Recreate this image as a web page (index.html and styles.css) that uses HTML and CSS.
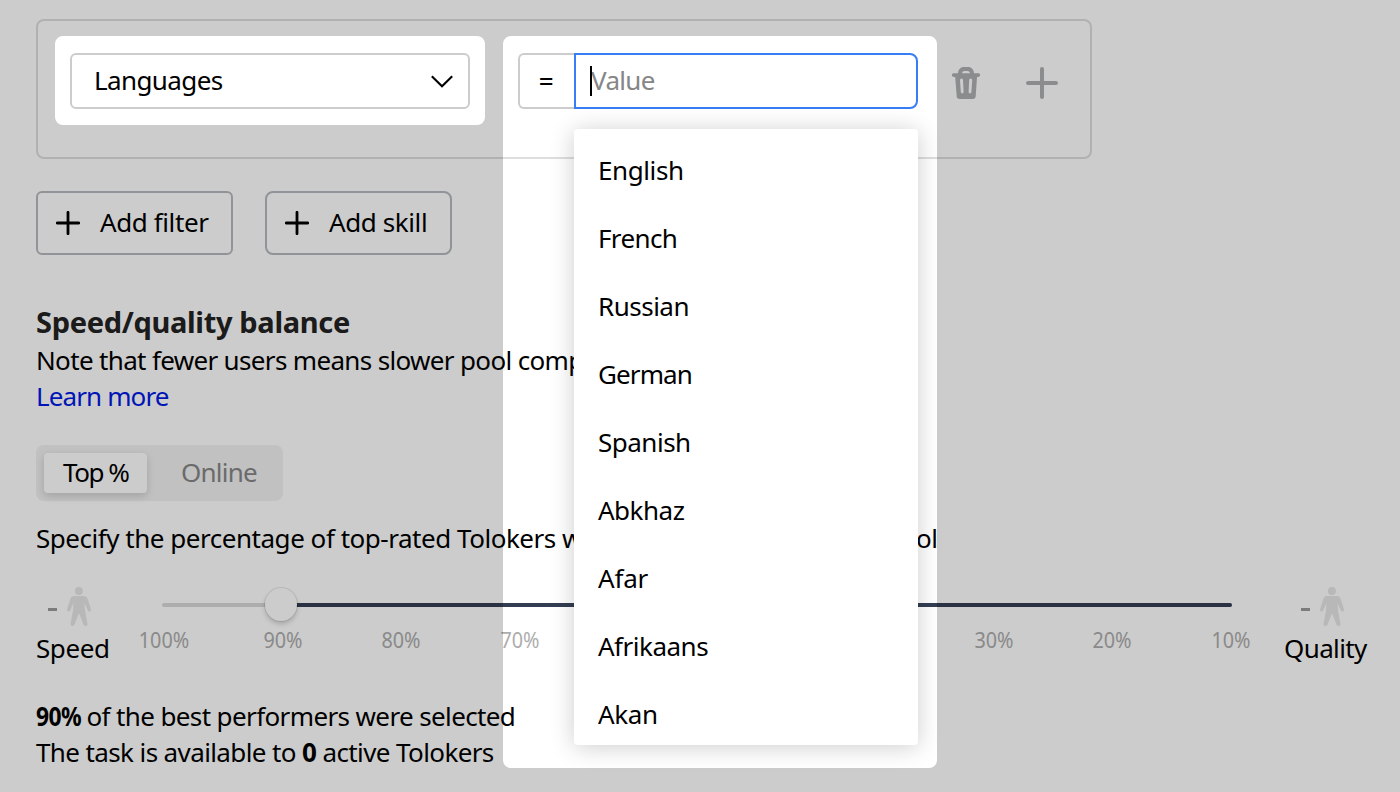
FILE: index.html
```
<!DOCTYPE html>
<html lang="en">
<head>
<meta charset="utf-8">
<title>Pool filters</title>
<link rel="stylesheet" href="styles.css">
</head>
<body>
<svg class="defs" width="0" height="0">
  <symbol id="person" viewBox="0 0 24 39"><circle cx="11.9" cy="4" r="4"/><path d="M7.5 9.1h9c2.2 0 3.600 1.200 4.400 3.300l2.800 9.100c.5 1.900-.2 2.900-1.200 2.900-.9 0-1.400-.5-1.800-1.500l-3.200-6.800.4 7 2.500 13.300c.3 1.500-.4 2.600-1.800 2.600-1.100 0-1.900-.6-2.300-1.900L12 26.200 7.700 37.100c-.4 1.300-1.200 1.900-2.300 1.900-1.400 0-2.100-1.100-1.800-2.600l2.500-13.300.4-7-3.200 6.800c-.4 1-.9 1.500-1.800 1.500-1 0-1.700-1-1.200-2.900l2.800-9.100c.8-2.100 2.200-3.300 4.400-3.300z"/></symbol>
</svg>
<main class="page">
  <section class="filter-box">
    <div class="select"><span class="select-text">Languages</span>
      <svg class="chevron" width="22" height="13" viewBox="0 0 22 13"><path d="M.8 1.200 11 11.200 21.200 1.200"/></svg>
    </div>
    <div class="condition">
      <div class="operator">=</div>
      <div class="field"><span class="placeholder">Value</span><i class="caret"></i>
        <ul class="menu">
          <li class="ls-4">English</li>
          <li class="ls-6">French</li>
          <li class="ls-5">Russian</li>
          <li class="ls-9">German</li>
          <li class="ls-5">Spanish</li>
          <li class="ls-5">Abkhaz</li>
          <li class="ls-2">Afar</li>
          <li class="ls-5">Afrikaans</li>
          <li class="ls-4">Akan</li>
        </ul>
      </div>
    </div>
    <svg class="trash" width="28" height="32" viewBox="0 0 28 32"><path fill-rule="evenodd" d="M6 6.200C6.300 2.500 8.500 0 12 0h4c3.500 0 5.700 2.500 6 6.200h4.200a1.900 1.900 0 0 1 0 3.800H25l-1.300 19.200c-.1 1.700-1.200 2.800-2.900 2.800H7.600c-1.700 0-2.800-1.100-2.900-2.800L3.200 10H1.800a1.900 1.900 0 0 1 0-3.800zM10 6.200h8c-.3-1.300-1.200-2.200-2.500-2.200h-3c-1.300 0-2.200.9-2.500 2.200zM8 13l.8 12a1.400 1.400 0 0 0 2.800 0l-.6-12a1.500 1.500 0 0 0-3 0zM17.200 13l-.6 12a1.400 1.400 0 0 0 2.800 0l.8-12a1.500 1.500 0 0 0-3 0z"/></svg>
    <svg class="add" width="32" height="32" viewBox="0 0 32 32"><path d="M16 2v28M2 16h28"/></svg>
  </section>

  <div class="actions">
    <button class="btn"><svg width="24" height="24" viewBox="0 0 24 24"><path d="M12 1.300v21.400M1.300 12h21.400"/></svg><span>Add filter</span></button>
    <button class="btn btn-skill"><svg width="24" height="24" viewBox="0 0 24 24"><path d="M12 1.300v21.400M1.300 12h21.400"/></svg><span>Add skill</span></button>
  </div>

  <h2 class="title">Speed/quality balance</h2>
  <p class="line note">Note that fewer users means slower pool comp</p>
  <p class="line"><a class="link" href="#">Learn more</a></p>

  <div class="toggle">
    <span class="tab tab-active">Top %</span>
    <span class="tab">Online</span>
  </div>

  <p class="line hint"><span>Specify the percentage of top-rated Tolokers w</span><span>ol</span></p>

  <div class="balance">
    <div class="side">
      <div class="figure"><i class="dash"></i><svg class="person" width="24" height="39"><use href="#person"/></svg></div>
      <div class="line ls-4">Speed</div>
    </div>
    <div class="slider">
      <div class="track"><div class="rest"></div><i class="thumb"></i></div>
      <div class="ticks"><span>100%</span><span>90%</span><span>80%</span><span>70%</span><span></span><span></span><span></span><span>30%</span><span>20%</span><span>10%</span></div>
    </div>
    <div class="side">
      <div class="figure"><i class="dash"></i><svg class="person" width="24" height="39"><use href="#person"/></svg></div>
      <div class="line ls-6">Quality</div>
    </div>
  </div>

  <p class="line ls-6"><b class="percent">90%</b> of the best performers were selected</p>
  <p class="line summary">The task is available to <b>0</b> active Tolokers</p>
</main>
<svg class="shade" width="1400" height="792" viewBox="0 0 1400 792"><path fill-rule="evenodd" d="M0 0H1400V792H0zM63 36H477a8 8 0 0 1 8 8V117a8 8 0 0 1-8 8H63a8 8 0 0 1-8-8V44a8 8 0 0 1 8-8zM511 36H929a8 8 0 0 1 8 8V760a8 8 0 0 1-8 8H511a8 8 0 0 1-8-8V44a8 8 0 0 1 8-8z"/></svg>
</body>
</html>
```
FILE: styles.css
```
* { box-sizing: border-box; }
body {
  margin: 0;
  height: 792px;
  overflow: hidden;
  background: #fff;
  color: #000;
  font: 26px/36px "Noto Sans", "Open Sans", sans-serif;
  letter-spacing: -.5px;
}
p, h2, ul { margin: 0; padding: 0; }
.defs { position: absolute; }
.shade { position: absolute; z-index: 3; top: 0; left: 0; fill: rgba(0, 0, 0, .2); pointer-events: none; }
.page { width: 1400px; padding: 19px 32px 0 36px; }

.ls-2 { letter-spacing: -.2px; }
.ls-4 { letter-spacing: -.4px; }
.ls-5 { letter-spacing: -.5px; }
.ls-6 { letter-spacing: -.62px; }
.ls-9 { letter-spacing: -.9px; }

.filter-box {
  display: flex;
  align-items: flex-start;
  width: 1056px;
  height: 140px;
  padding: 32px;
  border: 2px solid #dedede;
  border-radius: 8px;
}
.select {
  display: flex;
  align-items: center;
  justify-content: space-between;
  width: 400px;
  height: 56px;
  padding: 0 15px 0 22px;
  border: 2px solid #ccc;
  border-radius: 6px;
}
.select-text { padding-bottom: 2px; letter-spacing: -.6px; }
.chevron { fill: none; stroke: #000; stroke-width: 2.1; }
.condition { display: flex; margin-left: 48px; }
.operator {
  width: 56px;
  height: 56px;
  padding-right: 2px;
  border: 2px solid #ccc;
  border-right: 0;
  border-radius: 6px 0 0 6px;
  font-weight: 500;
  line-height: 50px;
  text-align: center;
}
.field {
  position: relative;
  z-index: 2;
  width: 344px;
  height: 56px;
  padding-left: 15px;
  border: 2px solid #377df5;
  border-radius: 0 8px 8px 0;
  line-height: 50px;
}
.placeholder { color: #868686; letter-spacing: -.7px; }
.caret { position: absolute; left: 14px; top: 11px; width: 2px; height: 30px; background: #000; }
.menu {
  position: absolute;
  left: -2px;
  top: 74px;
  width: 344px;
  height: 616px;
  padding: 7px 24px 0;
  overflow: hidden;
  border-radius: 4px;
  background: #fff;
  box-shadow: 0 2px 24px rgba(0, 0, 0, .2);
  list-style: none;
  line-height: 68px;
}
.trash { margin: 14px 0 0 34px; fill: #adb0b2; }
.add { margin: 14px 0 0 46px; stroke: #adb0b2; stroke-width: 4; stroke-linecap: round; }

.actions { display: flex; gap: 32px; margin-top: 32px; }
.btn {
  display: flex;
  align-items: center;
  gap: 20px;
  width: 197px;
  height: 64px;
  padding: 0 0 0 18px;
  border: 2px solid #b4babe;
  border-radius: 6px;
  background: none;
  color: inherit;
  font: inherit;
  letter-spacing: -.4px;
}
.btn-skill { width: 187px; border-radius: 8px; }
.btn span { padding-bottom: 2px; }
.btn svg { stroke: #000; stroke-width: 2.8; stroke-linecap: round; }

.title { margin: 49px 0 2px; color: #222; font-size: 29px; font-weight: 700; letter-spacing: -.32px; }
.line { height: 36px; white-space: nowrap; }
.note { letter-spacing: -.66px; }
.summary { letter-spacing: -.61px; }
.link { color: #001ae6; text-decoration: none; letter-spacing: -.88px; }

.toggle {
  display: flex;
  width: 247px;
  height: 56px;
  margin-top: 31px;
  padding: 8px;
  border-radius: 8px;
  background: #f2f2f2;
  line-height: 38px;
}
.tab { padding-left: 34px; color: #868686; letter-spacing: -.75px; }
.tab-active {
  width: 103px;
  padding-left: 19px;
  border-radius: 4px;
  background: #fff;
  box-shadow: 0 3px 8px rgba(0, 0, 0, .16);
  color: #000;
  letter-spacing: -1.45px;
}
.hint { display: flex; justify-content: space-between; width: 901.5px; margin-top: 19px; letter-spacing: -.47px; }

.balance {
  display: grid;
  grid-template-columns: 74px 1070px 84px;
  justify-content: space-between;
  height: 79px;
  margin: 31px 0 32px;
}
.figure { display: flex; align-items: center; justify-content: center; gap: 10px; height: 39px; margin-bottom: 4px; padding-right: 8px; }
.dash { width: 9px; height: 3px; margin-top: 5px; background: #9c9c9c; }
.person { fill: #e6e6e6; }
.slider { padding-top: 16px; }
.track { position: relative; height: 4px; border-radius: 2px; background: #d9d9d9; }
.rest { height: 4px; margin-left: 118px; border-radius: 2px; background: #343e53; }
.thumb {
  position: absolute;
  left: 103px;
  top: -15px;
  width: 32px;
  height: 33px;
  border-radius: 50%;
  background: #fff;
  box-shadow: 0 0 0 1px rgba(0, 0, 0, .08), 0 3px 5px rgba(0, 0, 0, .18);
}
.ticks {
  display: flex;
  justify-content: space-between;
  margin: 17px -28.5px 0 -28px;
  color: #adadad;
  font-size: 22px;
  line-height: 30px;
  letter-spacing: 0;
}
.ticks span { width: 60px; text-align: center; transform: scaleX(.9); }
.percent { display: inline-block; margin-right: -7px; transform: scaleX(.88); transform-origin: 0 50%; }
```
